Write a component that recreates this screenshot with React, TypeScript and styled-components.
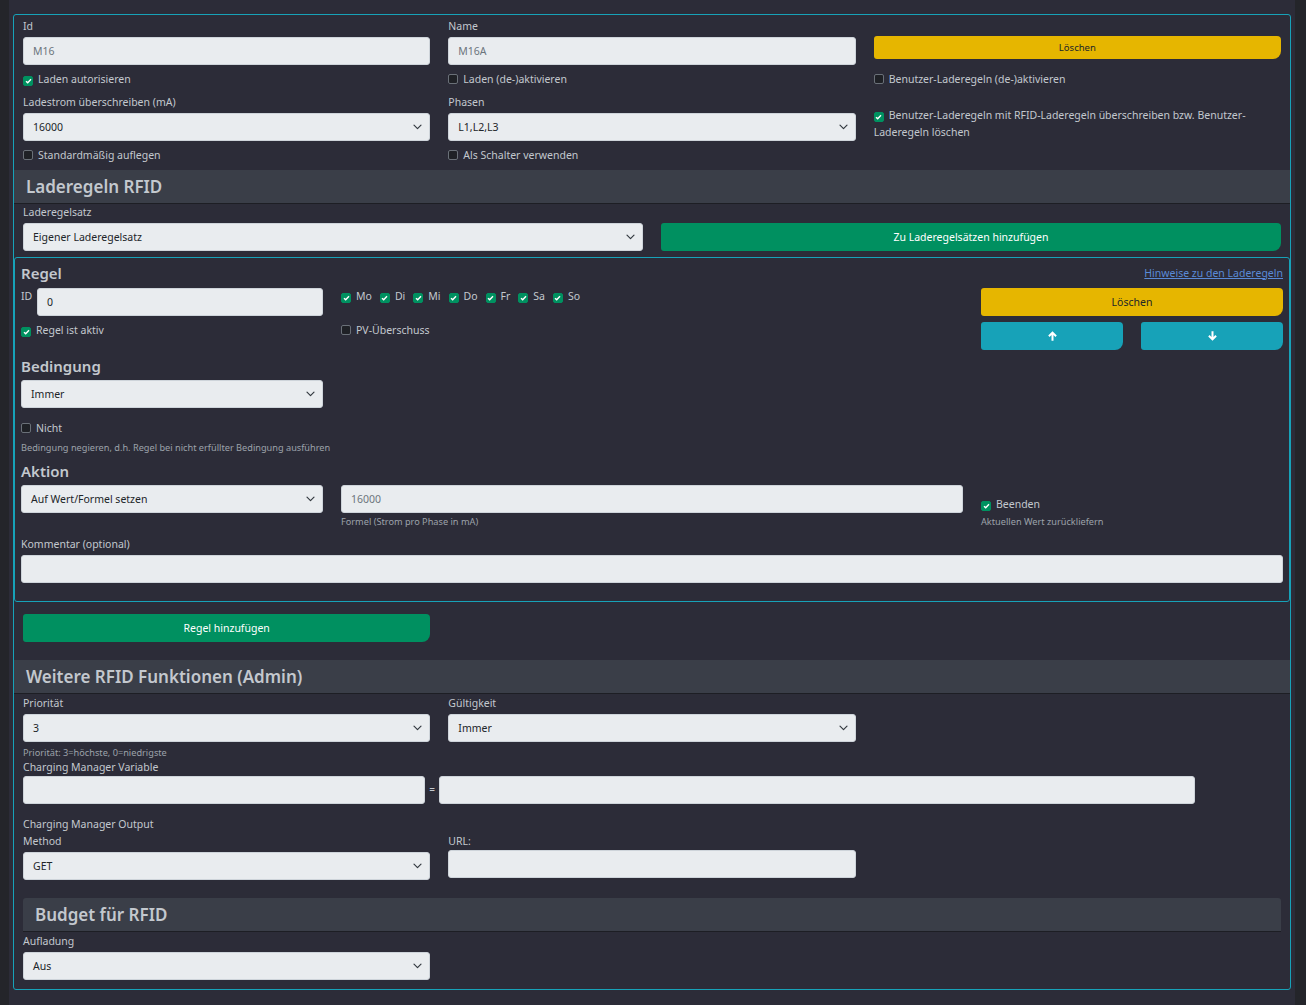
import React from "react";
import styled, { createGlobalStyle } from "styled-components";

const Global = createGlobalStyle`
  html, body { margin: 0; padding: 0; background: #24252a; }
  body { font-family: "Noto Sans", "Open Sans", sans-serif; font-size: 10.5px; color: #c3c8ce; }
  * { box-sizing: border-box; }
`;

const Page = styled.div`
  margin: 0 11px 0 9px;
  background: #2c2c38;
  min-height: 1005px;
  padding: 14px 4px 16px 4px;
`;

const Card = styled.div`
  border: 1px solid #17a2b8;
  border-radius: 3px;
  padding: 3px 0 9px;
`;

const Block = styled.div<{ $mt?: number }>`
  padding: 0 9px;
  margin-top: ${(p) => p.$mt ?? 0}px;
`;

const Grid = styled.div<{ $cols: number; $mt?: number; $rowGap?: number }>`
  display: grid;
  grid-template-columns: repeat(${(p) => p.$cols}, minmax(0, 1fr));
  column-gap: 18px;
  row-gap: ${(p) => p.$rowGap ?? 0}px;
  margin-top: ${(p) => p.$mt ?? 0}px;
  align-items: start;
`;

const Cell = styled.div<{ $col?: string; $mt?: number }>`
  grid-column: ${(p) => p.$col ?? "auto"};
  margin-top: ${(p) => p.$mt ?? 0}px;
  min-width: 0;
`;

const Label = styled.div<{ $gap?: number; $mt?: number }>`
  line-height: 16px;
  margin-top: ${(p) => p.$mt ?? 0}px;
  margin-bottom: ${(p) => p.$gap ?? 3}px;
  color: #c3c8ce;
  font-size: 10.5px;
  white-space: nowrap;
`;

const Input = styled.div<{ $muted?: boolean; $h?: number }>`
  height: ${(p) => p.$h ?? 28}px;
  width: 100%;
  display: flex;
  align-items: center;
  justify-content: space-between;
  padding: 0 7px 0 9px;
  background: #e9ecef;
  border: 1px solid #ced4da;
  border-radius: 3px;
  font-size: 10.5px;
  color: ${(p) => (p.$muted ? "#6c757d" : "#212529")};
  white-space: nowrap;
`;

const Help = styled.div<{ $mt?: number }>`
  font-size: 9.2px;
  line-height: 12px;
  color: #9ca2aa;
  margin-top: ${(p) => p.$mt ?? 0}px;
  white-space: nowrap;
`;

const CheckRow = styled.div<{ $lh?: number; $mt?: number }>`
  display: block;
  line-height: ${(p) => p.$lh ?? 16}px;
  margin-top: ${(p) => p.$mt ?? 0}px;
  font-size: 10.5px;
  color: #c3c8ce;
`;

const Box = styled.span<{ $on?: boolean }>`
  display: inline-flex;
  align-items: center;
  justify-content: center;
  width: 10px;
  height: 10px;
  margin-right: 5px;
  vertical-align: -1px;
  border-radius: 2px;
  background: ${(p) => (p.$on ? "#009160" : "#1f2126")};
  border: 1px solid ${(p) => (p.$on ? "#009160" : "#6a7078")};
`;

const Days = styled.div`
  display: flex;
  gap: 8px;
`;

const Band = styled.div<{ $inset?: boolean; $mt?: number }>`
  height: 34px;
  display: flex;
  align-items: center;
  padding: 0 12px;
  background: #3a3e48;
  border-bottom: 1px solid #1d1e24;
  border-radius: ${(p) => (p.$inset ? "3px 3px 0 0" : "0")};
  margin-top: ${(p) => p.$mt ?? 0}px;
  font-size: 17px;
  font-weight: 600;
  color: #c3c8ce;
  white-space: nowrap;
`;

const tones = {
  warn: { bg: "#e6b600", fg: "#212529" },
  success: { bg: "#009060", fg: "#ffffff" },
  info: { bg: "#17a2b8", fg: "#ffffff" },
};

const Button = styled.div<{ $tone: keyof typeof tones; $h?: number; $fs?: number; $mt?: number }>`
  height: ${(p) => p.$h ?? 28}px;
  margin-top: ${(p) => p.$mt ?? 0}px;
  display: flex;
  align-items: center;
  justify-content: center;
  background: ${(p) => tones[p.$tone].bg};
  color: ${(p) => tones[p.$tone].fg};
  border-radius: 3px 4px 8px 3px;
  font-size: ${(p) => p.$fs ?? 10.5}px;
  white-space: nowrap;
`;

const RuleCard = styled.div`
  margin-top: 6px;
  border: 1px solid #17a2b8;
  border-radius: 3px;
  padding: 6px 6px 6px;
`;

const RuleHead = styled.div`
  display: flex;
  align-items: center;
  justify-content: space-between;
`;

const H4 = styled.div<{ $mt?: number }>`
  font-size: 15px;
  font-weight: 600;
  line-height: 19px;
  color: #c3c8ce;
  margin-top: ${(p) => p.$mt ?? 0}px;
`;

const Link = styled.a`
  color: #5a8ad6;
  text-decoration: underline;
  font-size: 10.5px;
  margin-top: -2px;
`;

const IdField = styled.div`
  display: flex;
  align-items: flex-start;
  gap: 4px;
`;

const IdLabel = styled.span`
  line-height: 16px;
  width: 12px;
  flex: none;
`;

const Pair = styled.div`
  display: grid;
  grid-template-columns: 1fr 1fr;
  column-gap: 18px;
`;

const VarRow = styled.div`
  display: grid;
  grid-template-columns: 402px 14px 756px;
  align-items: center;
`;

const Eq = styled.span`
  text-align: center;
  font-size: 10px;
  color: #c3c8ce;
  margin-top: -2px;
`;

const Chevron = () => (
  <svg width="9" height="6" viewBox="0 0 9 6">
    <path d="M1 1.2l3.5 3.5 3.5-3.5" fill="none" stroke="#343a40" strokeWidth="1.2" strokeLinecap="round" strokeLinejoin="round" />
  </svg>
);

const Tick = () => (
  <svg width="7" height="6" viewBox="0 0 7 6">
    <path d="M1 3.2l1.7 1.6L6 1.3" fill="none" stroke="#ffffff" strokeWidth="1.4" />
  </svg>
);

const Arrow = ({ down }: { down?: boolean }) => (
  <svg width="9" height="10" viewBox="0 0 9 10" style={down ? { transform: "rotate(180deg)" } : undefined}>
    <path d="M4.5 0.3 L8.8 4.6 L7.4 6 L5.5 4.1 V9.7 H3.5 V4.1 L1.6 6 L0.2 4.6 Z" fill="#ffffff" />
  </svg>
);

function Check({ on, children, lh, mt }: { on?: boolean; children: React.ReactNode; lh?: number; mt?: number }) {
  return (
    <CheckRow $lh={lh} $mt={mt}>
      <Box $on={on}>{on && <Tick />}</Box>
      {children}
    </CheckRow>
  );
}

function Select({ value, muted }: { value: string; muted?: boolean }) {
  return (
    <Input $muted={muted}>
      <span>{value}</span>
      <Chevron />
    </Input>
  );
}

function Field({ label, children, gap, mt }: { label: string; children: React.ReactNode; gap?: number; mt?: number }) {
  return (
    <div>
      <Label $gap={gap} $mt={mt}>
        {label}
      </Label>
      {children}
    </div>
  );
}

export default function App() {
  const days = ["Mo", "Di", "Mi", "Do", "Fr", "Sa", "So"];
  return (
    <>
      <Global />
      <Page>
        <Card>
          <Block>
            <Grid $cols={3}>
              <Field label="Id">
                <Input $muted>M16</Input>
              </Field>
              <Field label="Name">
                <Input $muted>M16A</Input>
              </Field>
              <Cell $mt={18}>
                <Button $tone="warn" $h={23} $fs={9.5}>
                  Löschen
                </Button>
              </Cell>
            </Grid>
            <Grid $cols={3} $mt={6}>
              <Check on>Laden autorisieren</Check>
              <Check>Laden (de-)aktivieren</Check>
              <Check>Benutzer-Laderegeln (de-)aktivieren</Check>
            </Grid>
            <Grid $cols={3} $mt={7}>
              <Field label="Ladestrom überschreiben (mA)">
                <Select value="16000" />
              </Field>
              <Field label="Phasen">
                <Select value="L1,L2,L3" />
              </Field>
              <Check on lh={17} mt={13}>
                Benutzer-Laderegeln mit RFID-Laderegeln überschreiben bzw. Benutzer-Laderegeln löschen
              </Check>
            </Grid>
            <Grid $cols={3} $mt={6}>
              <Check>Standardmäßig auflegen</Check>
              <Check>Als Schalter verwenden</Check>
            </Grid>
          </Block>

          <Band $mt={7}>Laderegeln RFID</Band>

          <Block>
            <Grid $cols={2}>
              <Field label="Laderegelsatz">
                <Select value="Eigener Laderegelsatz" />
              </Field>
              <Cell $mt={19}>
                <Button $tone="success">Zu Laderegelsätzen hinzufügen</Button>
              </Cell>
            </Grid>
          </Block>

          <RuleCard>
            <RuleHead>
              <H4>Regel</H4>
              <Link>Hinweise zu den Laderegeln</Link>
            </RuleHead>
            <Grid $cols={4} $mt={5} $rowGap={6}>
              <IdField>
                <IdLabel>ID</IdLabel>
                <Input>0</Input>
              </IdField>
              <Cell $col="2 / span 2">
                <Days>
                  {days.map((d) => (
                    <Check key={d} on>
                      {d}
                    </Check>
                  ))}
                </Days>
              </Cell>
              <Cell $col="4">
                <Button $tone="warn">Löschen</Button>
              </Cell>
              <Check on>Regel ist aktiv</Check>
              <Check>PV-Überschuss</Check>
              <Cell $col="4">
                <Pair>
                  <Button $tone="info">
                    <Arrow />
                  </Button>
                  <Button $tone="info">
                    <Arrow down />
                  </Button>
                </Pair>
              </Cell>
            </Grid>

            <H4 $mt={7}>Bedingung</H4>
            <Grid $cols={4} $mt={4}>
              <Select value="Immer" />
            </Grid>
            <Check mt={12}>Nicht</Check>
            <Help $mt={6}>Bedingung negieren, d.h. Regel bei nicht erfüllter Bedingung ausführen</Help>

            <H4 $mt={8}>Aktion</H4>
            <Grid $cols={4} $mt={4}>
              <Select value="Auf Wert/Formel setzen" />
              <Cell $col="2 / span 2">
                <Input $muted>16000</Input>
                <Help $mt={3}>Formel (Strom pro Phase in mA)</Help>
              </Cell>
              <Cell $col="4">
                <Check on mt={11}>
                  Beenden
                </Check>
                <Help $mt={4}>Aktuellen Wert zurückliefern</Help>
              </Cell>
            </Grid>
            <Label $mt={8}>Kommentar (optional)</Label>
            <Input />
            <div style={{ height: 12 }} />
          </RuleCard>

          <Block $mt={12}>
            <Grid $cols={3}>
              <Button $tone="success">Regel hinzufügen</Button>
            </Grid>
          </Block>

          <Band $mt={18}>Weitere RFID Funktionen (Admin)</Band>

          <Block>
            <Grid $cols={3} $mt={1}>
              <Field label="Priorität">
                <Select value="3" />
              </Field>
              <Field label="Gültigkeit">
                <Select value="Immer" />
              </Field>
            </Grid>
            <Help $mt={5}>Priorität: 3=höchste, 0=niedrigste</Help>
            <Label $mt={0} $gap={1}>
              Charging Manager Variable
            </Label>
            <VarRow>
              <Input />
              <Eq>=</Eq>
              <Input />
            </VarRow>
            <Label $mt={12} $gap={1}>
              Charging Manager Output
            </Label>
            <Grid $cols={3}>
              <Field label="Method">
                <Select value="GET" />
              </Field>
              <Field label="URL:" gap={1}>
                <Input />
              </Field>
            </Grid>

            <Band $inset $mt={18}>
              Budget für RFID
            </Band>
            <Field label="Aufladung" mt={1}>
              <Grid $cols={3}>
                <Select value="Aus" />
              </Grid>
            </Field>
          </Block>
        </Card>
      </Page>
    </>
  );
}
